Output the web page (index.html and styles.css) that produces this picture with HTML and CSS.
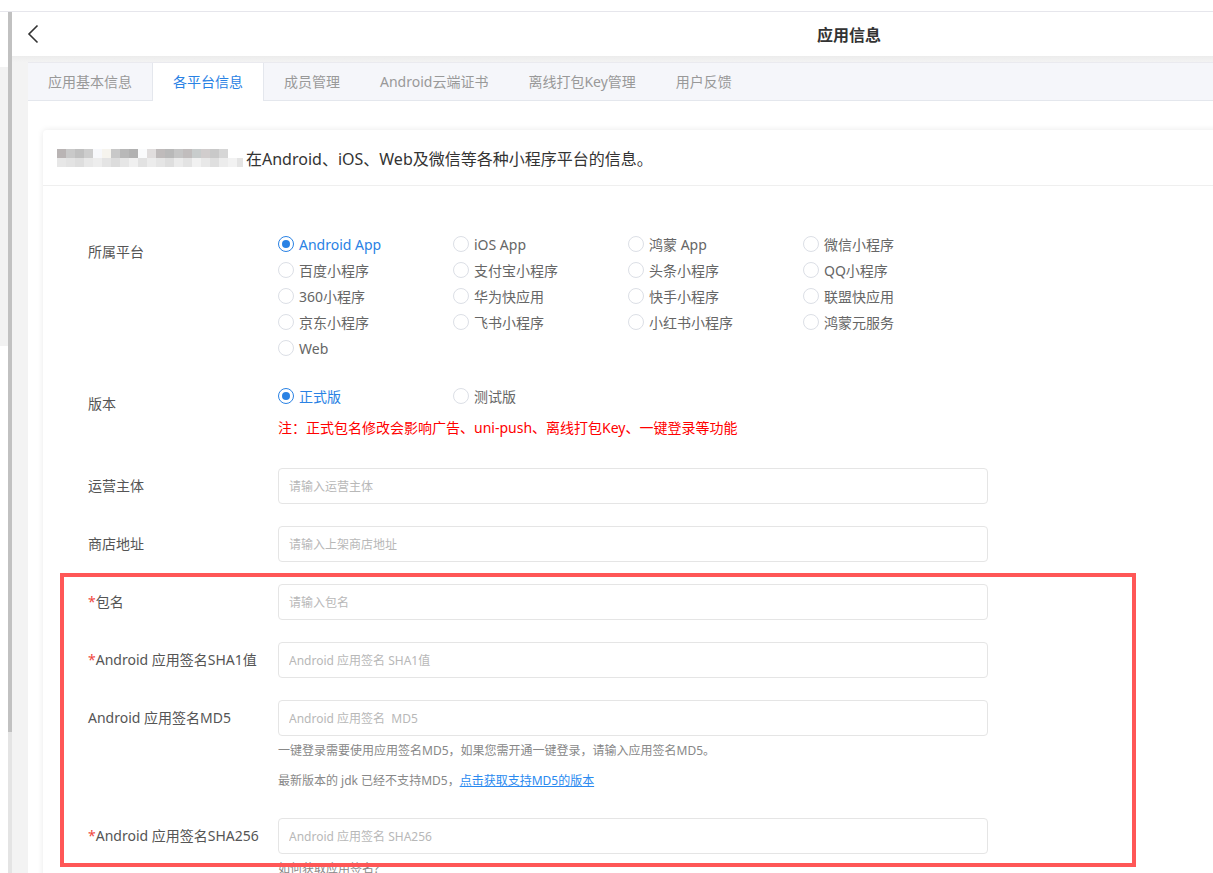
FILE: index.html
```html
<!DOCTYPE html>
<html lang="zh-CN">
<head>
    <meta charset="UTF-8">
    <title>应用信息</title>
    <link rel="stylesheet" href="styles.css">
</head>
<body>
    <div class="topbar"></div>
    <div class="frame">
        <div class="rail"></div>
        <div class="scrollbar"><div class="thumb"></div></div>
        <div class="page">
            <!-- Page header -->
            <div class="header">
                <svg class="back" width="12" height="20" viewBox="0 0 12 20">
                    <path d="M10.5 1.5 L2 10 L10.5 18.5" fill="none" stroke="#333" stroke-width="1.6"/>
                </svg>
                <div class="header-title">应用信息</div>
            </div>

            <div class="content">
                <div class="main">
                    <!-- Tabs -->
                    <div class="tabs">
                        <div class="tab">应用基本信息</div>
                        <div class="tab active">各平台信息</div>
                        <div class="tab">成员管理</div>
                        <div class="tab">Android云端证书</div>
                        <div class="tab">离线打包Key管理</div>
                        <div class="tab">用户反馈</div>
                    </div>

                    <div class="panel">
                        <div class="card">
                            <div class="card-head">
                                <span class="mosaic"></span>在Android、iOS、Web及微信等各种小程序平台的信息。
                            </div>

                            <div class="form">
                                <div class="form-item platform-item">
                                    <div class="form-label">所属平台</div>
                                    <div class="radio-group">
                                        <label class="radio checked"><span class="dot"></span>Android App</label>
                                        <label class="radio"><span class="dot"></span>iOS App</label>
                                        <label class="radio"><span class="dot"></span>鸿蒙 App</label>
                                        <label class="radio"><span class="dot"></span>微信小程序</label>
                                        <label class="radio"><span class="dot"></span>百度小程序</label>
                                        <label class="radio"><span class="dot"></span>支付宝小程序</label>
                                        <label class="radio"><span class="dot"></span>头条小程序</label>
                                        <label class="radio"><span class="dot"></span>QQ小程序</label>
                                        <label class="radio"><span class="dot"></span>360小程序</label>
                                        <label class="radio"><span class="dot"></span>华为快应用</label>
                                        <label class="radio"><span class="dot"></span>快手小程序</label>
                                        <label class="radio"><span class="dot"></span>联盟快应用</label>
                                        <label class="radio"><span class="dot"></span>京东小程序</label>
                                        <label class="radio"><span class="dot"></span>飞书小程序</label>
                                        <label class="radio"><span class="dot"></span>小红书小程序</label>
                                        <label class="radio"><span class="dot"></span>鸿蒙元服务</label>
                                        <label class="radio"><span class="dot"></span>Web</label>
                                    </div>
                                </div>

                                <div class="form-item version-item">
                                    <div class="form-label">版本</div>
                                    <div>
                                        <div class="radio-group">
                                            <label class="radio checked"><span class="dot"></span>正式版</label>
                                            <label class="radio"><span class="dot"></span>测试版</label>
                                        </div>
                                        <div class="warn">注：正式包名修改会影响广告、uni-push、离线打包Key、一键登录等功能</div>
                                    </div>
                                </div>

                                <div class="form-item">
                                    <div class="form-label">运营主体</div>
                                    <input class="input" type="text" placeholder="请输入运营主体">
                                </div>

                                <div class="form-item">
                                    <div class="form-label">商店地址</div>
                                    <input class="input" type="text" placeholder="请输入上架商店地址">
                                </div>

                                <div class="form-item">
                                    <div class="form-label"><span class="req">*</span>包名</div>
                                    <input class="input" type="text" placeholder="请输入包名">
                                </div>

                                <div class="form-item">
                                    <div class="form-label"><span class="req">*</span>Android 应用签名SHA1值</div>
                                    <input class="input" type="text" placeholder="Android 应用签名 SHA1值">
                                </div>

                                <div class="form-item">
                                    <div class="form-label">Android 应用签名MD5</div>
                                    <div>
                                        <input class="input" type="text" placeholder="Android 应用签名  MD5">
                                        <div class="hint">一键登录需要使用应用签名MD5，如果您需开通一键登录，请输入应用签名MD5。</div>
                                        <div class="hint">最新版本的 jdk 已经不支持MD5，<a href="#">点击获取支持MD5的版本</a></div>
                                    </div>
                                </div>

                                <div class="form-item">
                                    <div class="form-label"><span class="req">*</span>Android 应用签名SHA256</div>
                                    <div>
                                        <input class="input" type="text" placeholder="Android 应用签名 SHA256">
                                        <div class="hint">如何获取应用签名?</div>
                                    </div>
                                </div>
                            </div>
                        </div>
                    </div>
                </div>
            </div>
        </div>
    </div>

    <!-- Red annotation box -->
    <div class="highlight"></div>
</body>
</html>
```

FILE: styles.css
```css
/* Page */
body {
    margin: 0;
    width: 1213px;
    height: 873px;
    overflow: hidden;
    position: relative;
    font-family: "Noto Sans", "Noto Sans CJK SC", sans-serif;
    background-color: #fff;
    color: #333;
}

.topbar {
    height: 11px;
    border-bottom: 1px solid #e6e6ec;
}

.frame {
    display: flex;
    height: 861px;
}

/* Left strip + scrollbar */
.rail {
    width: 8px;
    background: linear-gradient(#fff 0 55px, #f2f2f2 55px 334px, #fff 334px);
}

.scrollbar {
    width: 4px;
    background-color: #e4e4e4;
}

.scrollbar .thumb {
    height: 720px;
    background-color: #c1c1c1;
}

.page {
    flex: 1;
    display: flex;
    flex-direction: column;
    min-width: 0;
}

/* Header */
.header {
    height: 44px;
    flex-shrink: 0;
    display: flex;
    align-items: center;
    padding-left: 15px;
    background-color: #fff;
}

.back {
    display: block;
}

.header-title {
    margin-left: 778px;
    font-size: 16px;
    font-weight: bold;
    color: #333;
}

.content {
    flex: 1;
    min-height: 0;
    overflow: hidden;
    background: linear-gradient(#ececec, #f3f3f3 6px);
    padding: 6px 0 0 16px;
}

.main {
    background-color: #fff;
    height: 100%;
}

/* Tabs */
.tabs {
    display: flex;
    height: 37px;
    background-color: #f5f6fa;
    border-top: 1px solid #eaeaef;
    border-bottom: 1px solid #e4e7ed;
}

.tab {
    padding: 0 20px;
    line-height: 37px;
    font-size: 14px;
    color: #999;
}

.tab.active {
    background-color: #fff;
    color: #2a82e4;
    border-left: 1px solid #e4e7ed;
    border-right: 1px solid #e4e7ed;
    height: 38px;
}

.panel {
    padding: 29px 0 0 15px;
}

/* Card */
.card {
    background-color: #fff;
    border-radius: 4px;
    box-shadow: 0 0 6px rgba(0, 0, 0, 0.09);
    margin-right: -40px;
    height: 900px;
}

.card-head {
    height: 55px;
    border-bottom: 1px solid #efefef;
    display: flex;
    align-items: center;
    padding-left: 14px;
    font-size: 16px;
    color: #333;
}

/* blurred (hidden) app name */
.mosaic {
    width: 186px;
    height: 18px;
    margin-right: 3px;
    filter: blur(0.7px);
    background:
        linear-gradient(to right, #b9b4b4 0 9px, #c9c9c9 9px 18px, #c0c0c0 18px 27px, #cdcdcd 27px 36px, #f7f8fb 36px 45px, #f6f4ee 45px 54px, #c8c8c8 54px 63px, #b8b8b8 63px 72px, #b1b1b1 72px 81px, #fafbfc 81px 90px, #e0dddd 90px 99px, #bfbbbb 99px 108px, #b9b9b9 108px 117px, #c5c5c5 117px 126px, #c1bdbd 126px 135px, #c8cccc 135px 144px, #d1cdcd 144px 153px, #c9c9c9 153px 162px, #d6d6d6 162px 171px, #fff 171px) top / 100% 9px no-repeat,
        linear-gradient(to right, #e7e7e7 0 9px, #e3e3e3 9px 18px, #dedede 18px 27px, #e8e8e8 27px 36px, #ededed 36px 45px, #e4e4e4 45px 54px, #dcdcdc 54px 63px, #e6e6e6 63px 72px, #f0f0f0 72px 81px, #e2e2e2 81px 90px, #ececec 90px 99px, #e5e5e5 99px 108px, #dedede 108px 117px, #ebebeb 117px 126px, #e3e3e3 126px 135px, #f1f1f1 135px 144px, #e8e8e8 144px 153px, #dfdfdf 153px 162px, #ececec 162px 171px, #f2f2f2 171px 180px, #e4e4e4 180px) bottom / 100% 9px no-repeat;
}

/* Form */
.form {
    padding: 47px 0 0 45px;
}

.form-item {
    display: flex;
    margin-bottom: 22px;
}

.platform-item {
    margin-bottom: 26px;
}

.version-item {
    margin-bottom: 29px;
}

.form-label {
    width: 190px;
    flex-shrink: 0;
    line-height: 36px;
    font-size: 14px;
    color: #555;
}

.platform-item .form-label,
.version-item .form-label {
    padding-top: 1px;
}

.req {
    color: #f0483e;
}

.radio-group {
    display: grid;
    grid-template-columns: repeat(4, 175px);
    grid-auto-rows: 22px;
    row-gap: 4px;
}

.radio {
    display: flex;
    align-items: center;
    font-size: 14px;
    color: #666;
}

.radio .dot {
    width: 14px;
    height: 14px;
    border: 1px solid #dcdfe6;
    border-radius: 50%;
    margin-right: 5px;
    position: relative;
}

.radio.checked {
    color: #2a82e4;
}

.radio.checked .dot {
    border-color: #2a82e4;
}

.radio.checked .dot::after {
    content: "";
    position: absolute;
    left: 3px;
    top: 3px;
    width: 8px;
    height: 8px;
    border-radius: 50%;
    background-color: #2a82e4;
}

.warn {
    margin-top: 10px;
    line-height: 22px;
    font-size: 14px;
    color: #f00;
}

.input {
    display: block;
    box-sizing: border-box;
    width: 710px;
    height: 36px;
    padding: 0 10px;
    border: 1px solid #e5e5e5;
    border-radius: 4px;
    font-family: "Noto Sans", "Noto Sans CJK SC", sans-serif;
    font-size: 12px;
    color: #333;
    outline: none;
}

.input::placeholder {
    color: #b8b8b8;
}

.hint {
    line-height: 30px;
    font-size: 12px;
    color: #888;
}

.hint a {
    color: #2a8af0;
    text-decoration: underline;
}

/* Red annotation */
.highlight {
    position: absolute;
    left: 60px;
    top: 573px;
    width: 1076px;
    height: 294px;
    box-sizing: border-box;
    border: 4px solid #ff5757;
}
```
